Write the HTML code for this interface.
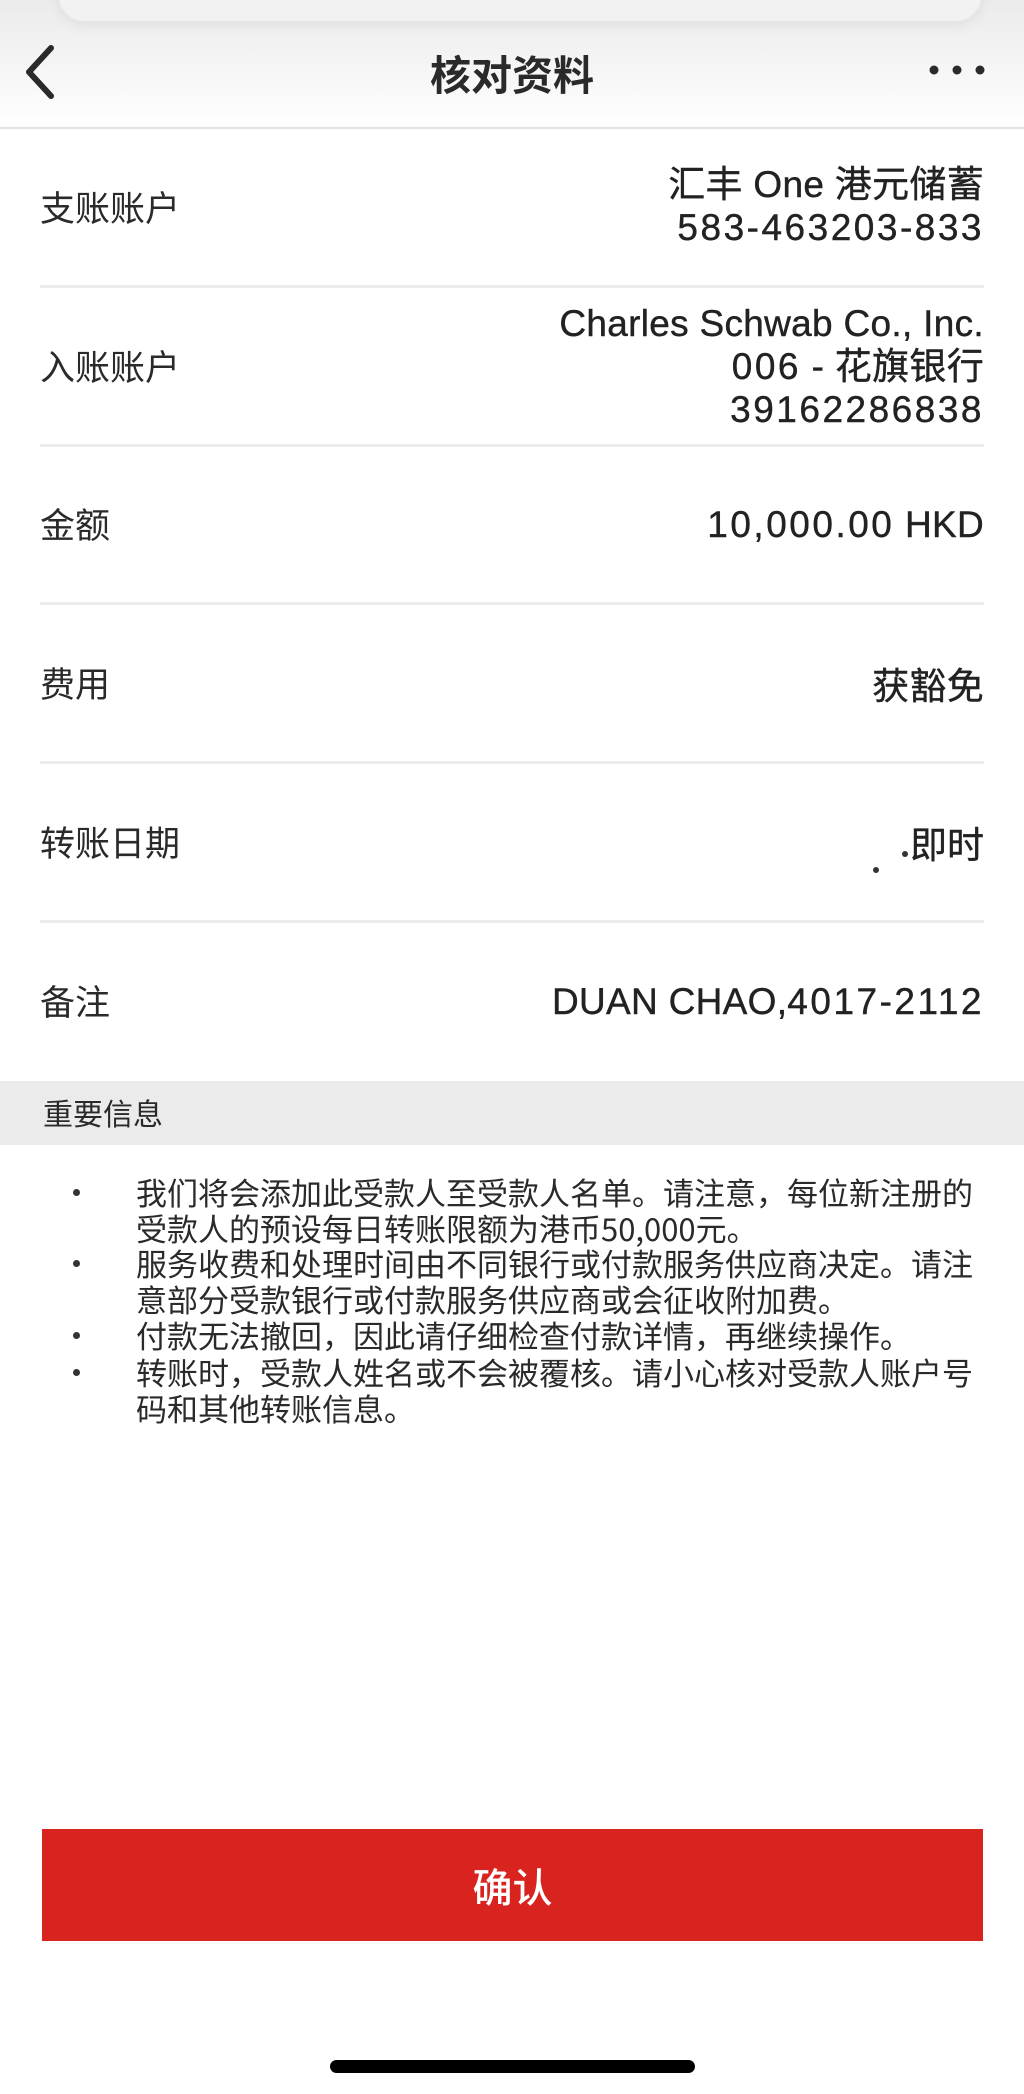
<!DOCTYPE html>
<html><head><meta charset="utf-8">
<style>
*{margin:0;padding:0;box-sizing:border-box}
body{width:1024px;height:2094px;background:#fff;position:relative;overflow:hidden;font-family:"Liberation Sans","Noto Sans CJK SC",sans-serif;color:#2a2a2a}
.abs{position:absolute}
.topbar{left:0;top:0;width:1024px;height:130px;background:linear-gradient(#ebebeb,#f7f7f7 60%,#fff)}
.pill{left:58px;top:-30px;width:924px;height:52px;border-radius:26px;background:#f2f2f2;border:1px solid #e6e6e6;box-shadow:0 4px 12px rgba(0,0,0,.06)}
.title{left:0;width:1024px;top:46px;text-align:center;font-size:41px;line-height:52px;color:#2a2a2a;font-family:"Noto Sans CJK SC",sans-serif;font-weight:700}
.hline{left:0;top:127px;width:1024px;height:2px;background:#e3e3e3}
.sep{left:40px;width:944px;height:3px;background:#ececec}
.label{left:40px;font-size:35px;line-height:43px;font-family:"Noto Sans CJK SC",sans-serif}
.val{right:40px;text-align:right;font-size:37px;line-height:43px;letter-spacing:0.3px;white-space:nowrap;color:#222;-webkit-text-stroke:0.4px #222}
.num{letter-spacing:2.5px}
.grey{left:0;top:1081px;width:1024px;height:64px;background:#ebebeb}
.imp{left:43px;top:1094px;font-size:30px;line-height:36px;font-family:"Noto Sans CJK SC",sans-serif}
.li{left:136px;font-size:31px;line-height:36px;white-space:nowrap;font-family:"Noto Sans CJK SC",sans-serif;color:#2a2a2a}
.dot{width:7px;height:7px;border-radius:4px;background:#333;left:73px}
.btn{left:42px;top:1829px;width:941px;height:112px;background:#d9231f;color:#fff;text-align:center;font-size:40px;line-height:112px;font-family:"Noto Sans CJK SC",sans-serif;font-weight:500}
.home{left:330px;top:2060px;width:365px;height:13px;border-radius:7px;background:#000}
</style></head><body>
<div class="abs topbar"></div>
<div class="abs pill"></div>
<svg class="abs" style="left:20px;top:44px" width="40" height="56" viewBox="0 0 40 56"><path d="M31 4 L9 28 L31 52" fill="none" stroke="#2a2a2a" stroke-width="6" stroke-linecap="round" stroke-linejoin="round"/></svg>
<div class="abs title">核对资料</div>
<svg class="abs" style="left:926px;top:62px" width="62" height="16"><circle cx="8" cy="8" r="4.5" fill="#2a2a2a"/><circle cx="31" cy="8" r="4.5" fill="#2a2a2a"/><circle cx="54" cy="8" r="4.5" fill="#2a2a2a"/></svg>
<div class="abs hline"></div>

<div class="abs label" style="top:185px">支账账户</div>
<div class="abs val" style="top:163px">汇丰 One 港元储蓄<br><span class="num">583-463203-833</span></div>
<div class="abs sep" style="top:285px"></div>

<div class="abs label" style="top:344px">入账账户</div>
<div class="abs val" style="top:302px">Charles Schwab Co., Inc.<br><span class="num">006</span> - 花旗银行<br><span class="num">39162286838</span></div>
<div class="abs sep" style="top:444px"></div>

<div class="abs label" style="top:502px">金额</div>
<div class="abs val" style="top:503px"><span class="num">10,000.00</span> HKD</div>
<div class="abs sep" style="top:602px"></div>

<div class="abs label" style="top:661px">费用</div>
<div class="abs val" style="top:662px;font-family:'Noto Sans CJK SC',sans-serif">获豁免</div>
<div class="abs sep" style="top:761px"></div>

<div class="abs label" style="top:820px">转账日期</div>
<div class="abs val" style="top:821px;font-family:'Noto Sans CJK SC',sans-serif;letter-spacing:0">即时</div>
<div class="abs" style="left:902px;top:851px;width:6px;height:6px;border-radius:3px;background:#333"></div>
<div class="abs" style="left:873px;top:867px;width:6px;height:6px;border-radius:3px;background:#333"></div>
<div class="abs sep" style="top:920px"></div>

<div class="abs label" style="top:979px">备注</div>
<div class="abs val" style="top:980px">DUAN CHAO,<span class="num">4017-2112</span></div>

<div class="abs grey"></div>
<div class="abs imp">重要信息</div>

<div class="abs dot" style="top:1189px"></div>
<div class="abs li" style="top:1174px">我们将会添加此受款人至受款人名单。请注意，每位新注册的<br>受款人的预设每日转账限额为港币50,000元。</div>
<div class="abs dot" style="top:1260px"></div>
<div class="abs li" style="top:1245px">服务收费和处理时间由不同银行或付款服务供应商决定。请注<br>意部分受款银行或付款服务供应商或会征收附加费。</div>
<div class="abs dot" style="top:1332px"></div>
<div class="abs li" style="top:1317px">付款无法撤回，因此请仔细检查付款详情，再继续操作。</div>
<div class="abs dot" style="top:1369px"></div>
<div class="abs li" style="top:1354px">转账时，受款人姓名或不会被覆核。请小心核对受款人账户号<br>码和其他转账信息。</div>

<div class="abs btn">确认</div>
<div class="abs home"></div>
</body></html>
